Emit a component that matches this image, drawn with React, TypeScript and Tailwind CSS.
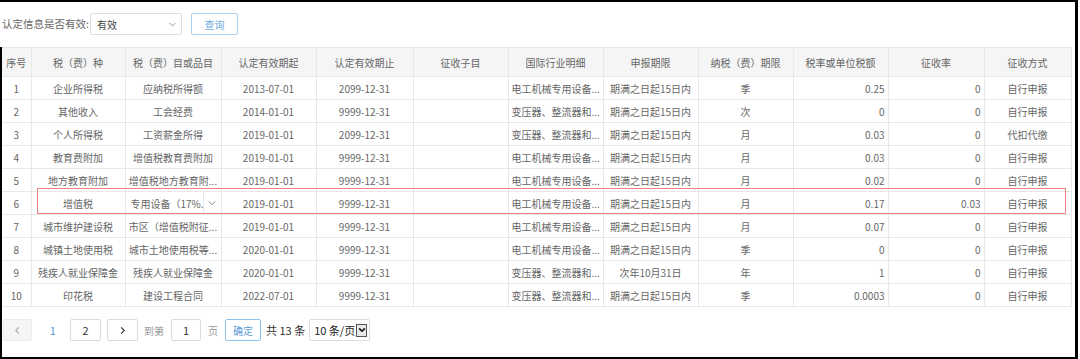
import React from 'react';

type Row = {
  no: number;
  tax: string;
  item: string;
  start: string;
  end: string;
  sub: string;
  industry: string;
  deadline: string;
  period: string;
  rate: string;
  levy: string;
  mode: string;
};

const DG = '电工机械专用设备...';
const BY = '变压器、整流器和...';
const QM = '期满之日起15日内';

const rows: Row[] = [
  { no: 1, tax: '企业所得税', item: '应纳税所得额', start: '2013-07-01', end: '2099-12-31', sub: '', industry: DG, deadline: QM, period: '季', rate: '0.25', levy: '0', mode: '自行申报' },
  { no: 2, tax: '其他收入', item: '工会经费', start: '2014-01-01', end: '9999-12-31', sub: '', industry: BY, deadline: QM, period: '次', rate: '0', levy: '0', mode: '自行申报' },
  { no: 3, tax: '个人所得税', item: '工资薪金所得', start: '2019-01-01', end: '2099-12-31', sub: '', industry: BY, deadline: QM, period: '月', rate: '0.03', levy: '0', mode: '代扣代缴' },
  { no: 4, tax: '教育费附加', item: '增值税教育费附加', start: '2019-01-01', end: '9999-12-31', sub: '', industry: DG, deadline: QM, period: '月', rate: '0.03', levy: '0', mode: '自行申报' },
  { no: 5, tax: '地方教育附加', item: '增值税地方教育附...', start: '2019-01-01', end: '9999-12-31', sub: '', industry: DG, deadline: QM, period: '月', rate: '0.02', levy: '0', mode: '自行申报' },
  { no: 6, tax: '增值税', item: '专用设备（17%...', start: '2019-01-01', end: '9999-12-31', sub: '', industry: DG, deadline: QM, period: '月', rate: '0.17', levy: '0.03', mode: '自行申报' },
  { no: 7, tax: '城市维护建设税', item: '市区（增值税附征...', start: '2019-01-01', end: '9999-12-31', sub: '', industry: DG, deadline: QM, period: '月', rate: '0.07', levy: '0', mode: '自行申报' },
  { no: 8, tax: '城镇土地使用税', item: '城市土地使用税等...', start: '2020-01-01', end: '9999-12-31', sub: '', industry: DG, deadline: QM, period: '季', rate: '0', levy: '0', mode: '自行申报' },
  { no: 9, tax: '残疾人就业保障金', item: '残疾人就业保障金', start: '2020-01-01', end: '9999-12-31', sub: '', industry: BY, deadline: '次年10月31日', period: '年', rate: '1', levy: '0', mode: '自行申报' },
  { no: 10, tax: '印花税', item: '建设工程合同', start: '2022-07-01', end: '9999-12-31', sub: '', industry: BY, deadline: QM, period: '季', rate: '0.0003', levy: '0', mode: '自行申报' },
];

const headers = ['序号', '税（费）种', '税（费）目或品目', '认定有效期起', '认定有效期止', '征收子目', '国际行业明细', '申报期限', '纳税（费）期限', '税率或单位税额', '征收率', '征收方式'];
const widths = [29, 94, 96, 95, 97, 95, 95, 95, 95, 95, 96, 87];

const Chevron = ({ className = '' }: { className?: string }) => (
  <svg className={className} viewBox="0 0 12 12" fill="none" stroke="currentColor" strokeWidth={1.2}>
    <path d="M2 4l4 4 4-4" />
  </svg>
);

export default function App() {
  const cell = 'border-r border-b border-[#e8e8e8] h-[23px] px-[3px] whitespace-nowrap overflow-hidden';

  return (
    <div
      className="relative w-[1078px] h-[359px] bg-white border-t-2 border-r-[3px] border-b-2 border-black text-[10px] text-[#666]"
      style={{ fontFamily: '"Noto Sans CJK SC", "Noto Sans", sans-serif' }}
    >
      {/* Filter */}
      <div className="flex items-center h-[45px] pl-[2px] pb-[1px]">
        <span className="text-[#666] text-[10.5px]">认定信息是否有效:</span>
        <div className="ml-[1px] w-[92px] h-[22px] border border-[#dcdcdc] rounded-[2px] flex items-center justify-between pl-[6px] pr-[4px] text-[#444]">
          <span>有效</span>
          <Chevron className="w-[9px] h-[9px] text-[#888]" />
        </div>
        <button className="ml-[9px] w-[47px] h-[22px] border border-[#a8d2f4] rounded-[2px] text-[#6aa9e0]">查询</button>
      </div>

      <div className="border-l-2 border-black h-[312px]">
        <table className="table-fixed border-collapse w-[1069px]">
          <colgroup>
            {widths.map((w, i) => (
              <col key={i} style={{ width: w }} />
            ))}
          </colgroup>
          <thead>
            <tr className="bg-[#f5f5f5]">
              {headers.map(h => (
                <th key={h} className="border-r border-b border-t border-[#e8e8e8] h-[29px] font-normal text-center text-[#666] whitespace-nowrap">
                  {h}
                </th>
              ))}
            </tr>
          </thead>
          <tbody>
            {rows.map(r => (
              <tr key={r.no}>
                <td className={`${cell} text-center`}>{r.no}</td>
                <td className={`${cell} text-center`}>{r.tax}</td>
                {r.no === 6 ? (
                  <td className="border-r border-b border-[#e8e8e8] h-[23px] p-0">
                    <div className="flex items-center h-full">
                      <span className="flex-1 pl-[5px] whitespace-nowrap overflow-hidden">{r.item}</span>
                      <span className="w-[18px] h-full border-l border-[#e8e8e8] flex items-center justify-center">
                        <Chevron className="w-[10px] h-[10px] text-[#888]" />
                      </span>
                    </div>
                  </td>
                ) : (
                  <td className={`${cell} text-center`}>{r.item}</td>
                )}
                <td className={`${cell} text-center`}>{r.start}</td>
                <td className={`${cell} text-center`}>{r.end}</td>
                <td className={cell}>{r.sub}</td>
                <td className={`${cell} text-left`}>{r.industry}</td>
                <td className={`${cell} text-center`}>{r.deadline}</td>
                <td className={`${cell} text-center`}>{r.period}</td>
                <td className={`${cell} text-right`}>{r.rate}</td>
                <td className={`${cell} text-right`}>{r.levy}</td>
                <td className={`${cell} text-center`}>{r.mode}</td>
              </tr>
            ))}
          </tbody>
        </table>

        {/* Pagination */}
        <div className="flex items-center mt-[12px] h-[22px] text-[10px]">
          <button className="ml-[1px] w-[29px] h-[22px] bg-[#f5f5f5] border border-[#ececec] rounded-[2px] flex items-center justify-center text-[#aaa]">
            <svg className="w-[9px] h-[9px]" viewBox="0 0 10 10" fill="none" stroke="currentColor" strokeWidth={1.2}>
              <path d="M6.5 1.5L3 5l3.5 3.5" />
            </svg>
          </button>
          <span className="ml-[18px] w-[8px] text-[#4a90d9]">1</span>
          <button className="ml-[12px] w-[31px] h-[22px] border border-[#dcdcdc] rounded-[2px] text-[#333] text-[11px]">2</button>
          <button className="ml-[6px] w-[31px] h-[22px] border border-[#dcdcdc] rounded-[2px] flex items-center justify-center text-[#333]">
            <svg className="w-[9px] h-[9px]" viewBox="0 0 10 10" fill="none" stroke="currentColor" strokeWidth={1.2}>
              <path d="M3.5 1.5L7 5l-3.5 3.5" />
            </svg>
          </button>
          <span className="ml-[6px] text-[#999]">到第</span>
          <div className="ml-[7px] w-[30px] h-[22px] border border-[#dcdcdc] rounded-[2px] flex items-center justify-center text-[#333] text-[11px]">1</div>
          <span className="ml-[7px] text-[#999]">页</span>
          <button className="ml-[7px] w-[36px] h-[22px] border border-[#8cc3ef] rounded-[2px] text-[#5b9bd5]">确定</button>
          <span className="ml-[5px] text-[#333] text-[11px]">共 13 条</span>
          <div className="ml-[4px] w-[61px] h-[22px] border border-[#dcdcdc] rounded-[2px] flex items-center pl-[4px] pr-[2px] text-[#222] text-[11px]">
            <span className="flex-1 whitespace-nowrap">10 条/页</span>
            <span className="w-[11px] h-[13px] border border-[#555] bg-[#e8e8e8] flex items-center justify-center">
              <svg className="w-[8px] h-[8px]" viewBox="0 0 10 10" fill="none" stroke="#111" strokeWidth={2}>
                <path d="M1.5 3l3.5 3.5L8.5 3" />
              </svg>
            </span>
          </div>
        </div>
      </div>

      {/* highlighted row marker */}
      <div className="absolute left-[37px] top-[186px] w-[1029px] h-[26px] border border-[#f08282] pointer-events-none" />
    </div>
  );
}
